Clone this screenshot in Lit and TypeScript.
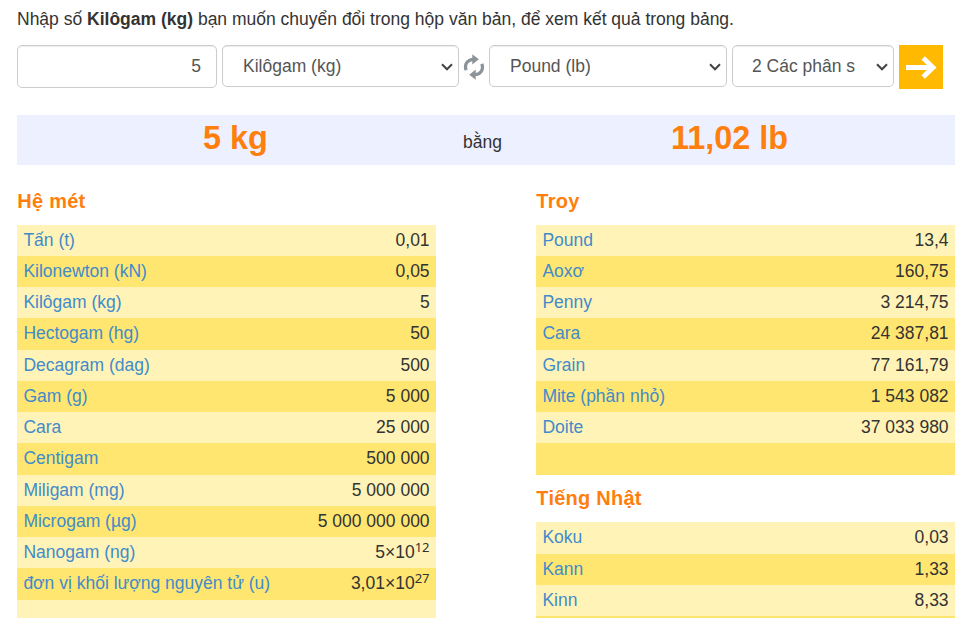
import { LitElement, html, css, svg } from "lit";
import { customElement, property } from "lit/decorators.js";

type Row = { name: string; value: string; exp?: string };
const row = (name: string, value: string, exp?: string): Row => ({ name, value, exp });

const METRIC: Row[] = [
  row("Tấn (t)", "0,01"),
  row("Kilonewton (kN)", "0,05"),
  row("Kilôgam (kg)", "5"),
  row("Hectogam (hg)", "50"),
  row("Decagram (dag)", "500"),
  row("Gam (g)", "5 000"),
  row("Cara", "25 000"),
  row("Centigam", "500 000"),
  row("Miligam (mg)", "5 000 000"),
  row("Microgam (µg)", "5 000 000 000"),
  row("Nanogam (ng)", "5×10", "12"),
  row("đơn vị khối lượng nguyên tử (u)", "3,01×10", "27"),
  row("", ""),
];
const TROY: Row[] = [
  row("Pound", "13,4"),
  row("Aoxơ", "160,75"),
  row("Penny", "3 214,75"),
  row("Cara", "24 387,81"),
  row("Grain", "77 161,79"),
  row("Mite (phần nhỏ)", "1 543 082"),
  row("Doite", "37 033 980"),
  row("", ""),
];
const JAPANESE: Row[] = [
  row("Koku", "0,03"),
  row("Kann", "1,33"),
  row("Kinn", "8,33"),
  row("", ""),
];

@customElement("unit-table")
class UnitTable extends LitElement {
  @property() heading = "";
  @property({ attribute: false }) rows: Row[] = [];

  static styles = css`
    :host { display: block; }
    h3 {
      margin: 0; height: 47.8px; line-height: var(--title-line, 48px); padding-left: 0.3px;
      font-size: 20px; letter-spacing: 0.25px; color: #ff7f0e;
    }
    .row {
      display: flex; justify-content: space-between; box-sizing: border-box;
      height: 31.25px; padding: 0 6.4px; line-height: 30px; background: #fff3b8; white-space: nowrap;
    }
    .row:nth-child(even) { background: #ffe671; }
    a { color: #428bca; }
    sup { font: 13.1px/0 "Noto Sans", sans-serif; position: relative; top: -6.4px; vertical-align: baseline; }
  `;

  render() {
    return html`<h3>${this.heading}</h3>
      <div>
        ${this.rows.map(
          (r) => html`<div class="row"><a>${r.name}</a><span>${r.value}${r.exp ? html`<sup>${r.exp}</sup>` : ""}</span></div>`
        )}
      </div>`;
  }
}

const chevron = svg`<path d="M1 1.3 6 6.3 11 1.3" fill="none" stroke="#444" stroke-width="2"/>`;

@customElement("app-root")
class AppRoot extends LitElement {
  static styles = css`
    :host {
      display: block; box-sizing: border-box; height: 618px; overflow: hidden; padding: 0 18px 0 17px;
      background: #fff; color: #333; font: 17.5px/25px "Liberation Sans", Arial, sans-serif;
    }
    .intro { height: 45px; line-height: 38px; white-space: nowrap; }
    .form { display: flex; align-items: flex-start; height: 70px; color: #555; }
    .box {
      display: flex; align-items: center; justify-content: space-between; box-sizing: border-box;
      height: 42px; border: 1px solid #ccc; border-radius: 5px; background: #fff;
      box-shadow: inset 0 1px 1px rgba(0, 0, 0, 0.075); padding: 0 5px 0 20px; white-space: nowrap;
    }
    .amount { width: 200px; height: 43px; justify-content: flex-end; padding-right: 15px; margin-right: 5px; }
    .from { width: 237px; }
    .to { width: 238px; margin-right: 5px; }
    .digits { width: 162px; padding-left: 19px; margin-right: 5px; }
    .swap { width: 30px; height: 44px; display: flex; align-items: center; justify-content: center; }
    .go { width: 44px; height: 44px; background: #ffb900; display: block; }
    .chev { width: 12px; height: 8px; margin-top: 1px; }
    .result { display: flex; height: 50px; background: #edf1ff; }
    .big { width: 437px; text-align: center; font-size: 32.4px; font-weight: bold; line-height: 46px; color: #ff7f0e; }
    .eq { width: 57px; text-align: center; line-height: 54px; }
    .tables { display: flex; justify-content: space-between; padding-top: 11.85px; }
    .col { width: 419px; }
    unit-table + unit-table { --title-line: 47px; }
  `;

  private select(cls: string, label: string) {
    return html`<div class="box ${cls}"><span>${label}</span><svg class="chev" viewBox="0 0 12 8">${chevron}</svg></div>`;
  }

  render() {
    return html`
      <div class="intro">Nhập số <b>Kilôgam (kg)</b> bạn muốn chuyển đổi trong hộp văn bản, để xem kết quả trong bảng.</div>
      <div class="form">
        <div class="box amount">5</div>
        ${this.select("from", "Kilôgam (kg)")}
        <div class="swap">
          <svg width="22" height="26" viewBox="0 0 22 26">
            <g fill="none" stroke="#8d9499" stroke-width="3.3">
              <path d="M3.2 16.2C1 10.4 4.4 5.6 10.5 5.3"/>
              <path d="M18.8 9.8C21 15.6 17.6 20.4 11.5 20.7"/>
            </g>
            <path d="M9.3 .2 15.8 5.3 9.3 10.4ZM12.7 15.6 6.2 20.7 12.7 25.8Z" fill="#8d9499"/>
          </svg>
        </div>
        ${this.select("to", "Pound (lb)")}
        ${this.select("digits", "2 Các phân s")}
        <svg class="go" viewBox="0 0 44 44">
          <path d="M7 22.5H33M24.2 13 34 22.5 24.2 32" fill="none" stroke="#fff" stroke-width="4.9"/>
        </svg>
      </div>
      <div class="result">
        <div class="big">5 kg</div><div class="eq">bằng</div><div class="big">11,02 lb</div>
      </div>
      <div class="tables">
        <div class="col"><unit-table heading="Hệ mét" .rows=${METRIC}></unit-table></div>
        <div class="col">
          <unit-table heading="Troy" .rows=${TROY}></unit-table>
          <unit-table heading="Tiếng Nhật" .rows=${JAPANESE}></unit-table>
        </div>
      </div>
    `;
  }
}
